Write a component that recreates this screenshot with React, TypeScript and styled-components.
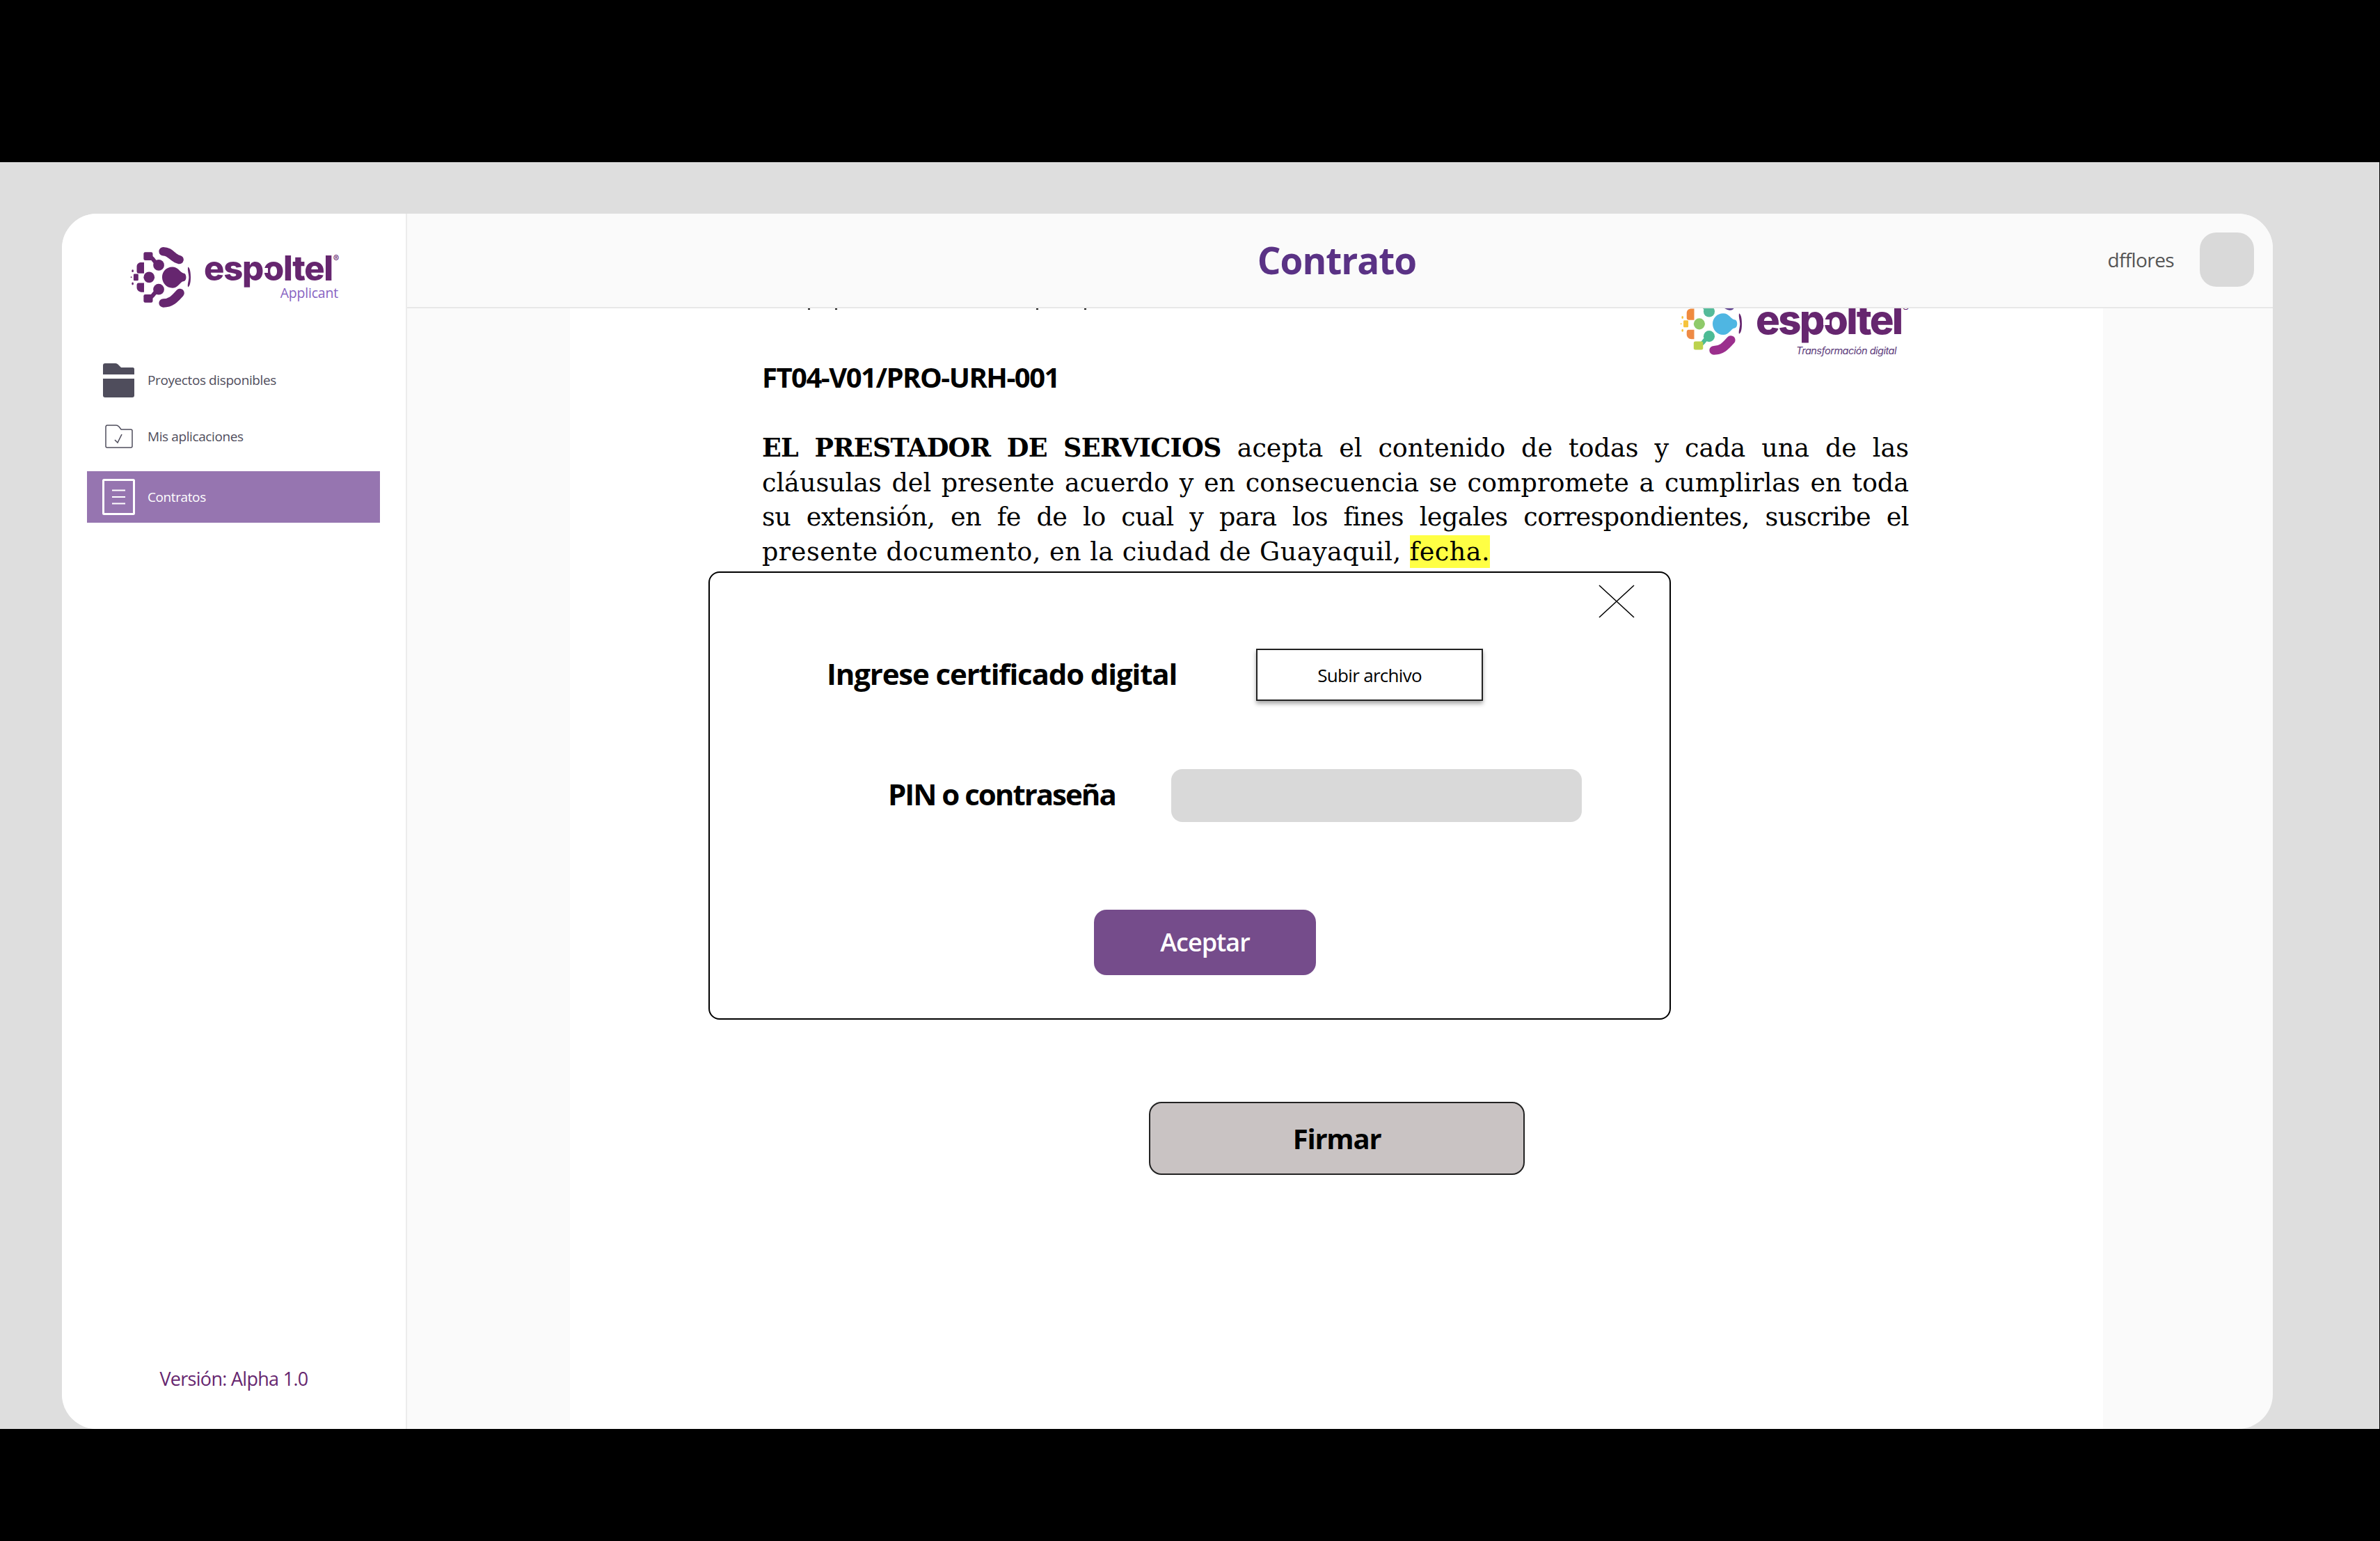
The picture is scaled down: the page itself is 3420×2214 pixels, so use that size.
import React from "react";
import styled, { createGlobalStyle } from "styled-components";

const GlobalStyle = createGlobalStyle`
  html, body { margin: 0; padding: 0; background: #000; }
  * { box-sizing: border-box; }
  #root { width: 3420px; height: 2214px; overflow: hidden; }
`;

const UI = `"Open Sans", "Noto Sans", sans-serif`;

const Frame = styled.div`
  width: 3420px;
  height: 2214px;
  background: #000;
  display: flex;
  flex-direction: column;
  padding-top: 233px;
  font-family: ${UI};
`;
const Stage = styled.div`
  width: 3419px;
  height: 1820px;
  background: #dedede;
  padding: 74px 0 0 89px;
`;
const Window = styled.div`
  width: 3177px;
  height: 1746px;
  border-radius: 50px;
  overflow: hidden;
  background: #fafafa;
  display: flex;
`;
const Sidebar = styled.aside`
  width: 496px;
  height: 100%;
  background: #fff;
  display: flex;
  flex-direction: column;
  flex: none;
  border-right: 2px solid #ececec;
`;
const Brand = styled.div`
  display: flex;
  align-items: flex-start;
  gap: 18px;
  padding: 47px 0 0 98px;
  height: 202px;
`;
const BrandText = styled.div`
  position: relative;
  width: 198px;
  padding-top: 7px;
`;
const Wordmark = styled.div<{ $size: number; $spacing: number }>`
  font-family: Inter, "Liberation Sans", sans-serif;
  font-weight: 800;
  font-size: ${(p) => p.$size}px;
  letter-spacing: ${(p) => p.$spacing}px;
  line-height: 1;
  color: #66266f;
  white-space: nowrap;
`;
const OpenO = styled.span`
  position: relative;
  display: inline-block;
  &::after {
    content: "";
    position: absolute;
    left: 0;
    top: 50%;
    width: 26%;
    height: 14%;
    margin-top: -1%;
    background: #fff;
  }
`;
const Reg = styled.sup`
  font-size: 0.26em;
  font-weight: 600;
  vertical-align: 2.1em;
  line-height: 0;
  margin-left: 1px;
`;
const Applicant = styled.div`
  position: absolute;
  right: 5px;
  top: 54px;
  font-size: 19.5px;
  line-height: 26px;
  letter-spacing: -0.2px;
  color: #8763c2;
`;
const Nav = styled.nav`
  display: flex;
  flex-direction: column;
  gap: 7px;
  width: 421px;
  margin-left: 36px;
`;
const NavItem = styled.div<{ $active?: boolean }>`
  height: 74px;
  display: flex;
  align-items: center;
  gap: 18px;
  padding-left: 22px;
  margin-top: ${(p) => (p.$active ? 6 : 0)}px;
  background: ${(p) => (p.$active ? "#9675b0" : "transparent")};
  color: ${(p) => (p.$active ? "#fff" : "#4f4d5c")};
  font-size: 19px;
  letter-spacing: -0.4px;
  white-space: nowrap;
`;
const NavIcon = styled.span`
  width: 47px;
  display: flex;
  justify-content: center;
  flex: none;
`;
const Version = styled.div`
  margin-top: auto;
  padding-bottom: 54px;
  text-align: center;
  font-size: 27px;
  line-height: 36px;
  letter-spacing: -0.7px;
  color: #66266f;
`;
const Main = styled.main`
  flex: 1;
  min-width: 0;
  display: flex;
  flex-direction: column;
`;
const Header = styled.header`
  height: 136px;
  flex: none;
  display: grid;
  grid-template-columns: 1fr auto 1fr;
  align-items: center;
  padding: 0 27px 2px 18px;
  background: #fafafa;
  border-bottom: 2px solid #e8e8e8;
`;
const Title = styled.h1`
  grid-column: 2;
  margin: 0;
  font-size: 53px;
  font-weight: 700;
  line-height: 1;
  letter-spacing: -1px;
  color: #5a3285;
`;
const UserBox = styled.div`
  grid-column: 3;
  justify-self: end;
  display: flex;
  align-items: center;
  gap: 37px;
`;
const UserName = styled.span`
  font-size: 28px;
  letter-spacing: -0.6px;
  color: #555;
`;
const Avatar = styled.div`
  width: 78px;
  height: 78px;
  border-radius: 24px;
  background: #d9d9d9;
`;
const Body = styled.div`
  flex: 1;
  min-height: 0;
  display: flex;
  padding: 0 244px 0 234px;
`;
const Doc = styled.div`
  position: relative;
  width: 2203px;
  height: 100%;
  overflow: hidden;
  background: #fff;
  padding: 0 279px 0 276px;
`;
const ClippedTail = styled.div`
  display: flex;
  height: 2px;
  padding-left: 66px;
  gap: 36px;
`;
const Tail = styled.i<{ $push?: number }>`
  width: 3px;
  height: 2px;
  background: #222;
  margin-left: ${(p) => p.$push ?? 0}px;
`;
const DocLogo = styled.div`
  display: flex;
  justify-content: flex-end;
  align-items: flex-start;
  gap: 19px;
  height: 63px;
  margin: -25px 6px 0 0;
`;
const DocLogoText = styled.div`
  position: relative;
  width: 214px;
  height: 88px;
  padding-top: 10px;
`;
const Tagline = styled.div`
  position: absolute;
  right: 12px;
  top: 76px;
  font-family: Inter, sans-serif;
  font-style: italic;
  font-size: 14.5px;
  line-height: 16px;
  letter-spacing: -0.5px;
  color: #5b3a7a;
  white-space: nowrap;
`;
const Code = styled.h2`
  margin: 34px 0 0;
  font-family: "Open Sans", sans-serif;
  font-size: 40px;
  line-height: 50px;
  font-weight: 700;
  letter-spacing: -1.5px;
  color: #000;
`;
const Paragraph = styled.div`
  margin-top: 52px;
  font-family: "DejaVu Serif", serif;
  font-size: 36.5px;
  line-height: 49.5px;
  color: #000;
`;
const Line = styled.div<{ $last?: boolean; $tight?: number }>`
  text-align: justify;
  text-align-last: ${(p) => (p.$last ? "left" : "justify")};
  letter-spacing: ${(p) => p.$tight ?? 0}px;
  white-space: ${(p) => (p.$last ? "nowrap" : "normal")};
`;
const Strong = styled.b`
  letter-spacing: -0.7px;
`;
const Mark2 = styled.span`
  background: #ffff44;
  padding: 2px 0;
`;
const Firmar = styled.button`
  display: block;
  width: 540px;
  height: 105px;
  margin: 766px 0 0 556px;
  background: #c9c3c3;
  border: 2px solid #222;
  border-radius: 18px;
  font-family: ${UI};
  font-size: 40px;
  font-weight: 700;
  letter-spacing: -1.2px;
  color: #000;
`;
const Modal = styled.section`
  position: absolute;
  left: 199px;
  top: 378px;
  width: 1383px;
  height: 644px;
  background: #fff;
  border: 2px solid #000;
  border-radius: 16px;
  padding-top: 109px;
`;
const Close = styled.button`
  position: absolute;
  top: 17px;
  right: 50px;
  width: 52px;
  height: 48px;
  padding: 0;
  border: 0;
  background: none;
  display: flex;
`;
const Field = styled.div<{ $indent: number; $gap: number; $after: number }>`
  display: flex;
  align-items: center;
  gap: ${(p) => p.$gap}px;
  padding-left: ${(p) => p.$indent}px;
  margin-bottom: ${(p) => p.$after}px;
`;
const Label = styled.label<{ $spacing: number }>`
  font-size: 42px;
  font-weight: 700;
  line-height: 1;
  letter-spacing: ${(p) => p.$spacing}px;
  padding-bottom: 4px;
  color: #000;
  white-space: nowrap;
`;
const Upload = styled.button`
  width: 326px;
  height: 75px;
  background: #fff;
  border: 2px solid #222;
  box-shadow: 0 4px 6px rgba(0, 0, 0, 0.35);
  font-family: ${UI};
  font-size: 26px;
  letter-spacing: -0.7px;
  color: #000;
`;
const Pin = styled.div`
  width: 590px;
  height: 76px;
  border-radius: 16px;
  background: #d9d9d9;
`;
const Accept = styled.button`
  display: block;
  width: 319px;
  height: 94px;
  margin-left: 552px;
  padding-bottom: 3px;
  border: 0;
  border-radius: 18px;
  background: #754c8b;
  color: #fff;
  font-family: ${UI};
  font-size: 36px;
  font-weight: 600;
  letter-spacing: -1px;
`;

type Palette = {
  blob: string; dot: string; topArc: string; upper: string; upperLeft: string;
  side: string; small: string; sideLow: string; lower: string; lowerLeft: string; lowArc: string; rim: string;
};
const solid = "#66266f";
const purple: Palette = {
  blob: solid, dot: solid, topArc: solid, upper: solid, upperLeft: solid, side: solid,
  small: solid, sideLow: solid, lower: solid, lowerLeft: solid, lowArc: solid, rim: solid,
};
const colour: Palette = {
  blob: "#4fb6e2", dot: "#8fca6a", topArc: "#5d3f8e", upper: "#55bb9a", upperLeft: "#8cc65e",
  side: "#ef8a3e", small: "#f5c33b", sideLow: "#ee8a45", lower: "#4cbb95", lowerLeft: "#bcd24e",
  lowArc: "#9b2f8d", rim: "#66266f",
};

const LogoMark = ({ size, c }: { size: number; c: Palette }) => (
  <svg width={size} height={size} viewBox="48 40 266 268" style={{ flex: "none" }}>
    <path fill={c.blob} d="M232 130C258 130 265 155 280 157C296 157 296 193 280 193C265 195 258 222 232 222C206 222 187 200 187 175C187 150 206 130 232 130Z" />
    <circle cx="130" cy="175" r="24" fill={c.dot} />
    <path fill="none" stroke={c.topArc} strokeWidth="38" strokeLinecap="round" d="M192 62C225 62 232 92 262 98" />
    <circle cx="172" cy="122" r="24" fill={c.upper} />
    <path fill="none" stroke={c.upper} strokeWidth="18" d="M128 84C150 88 150 110 172 122" />
    <rect x="106" y="65" width="40" height="36" rx="7" fill={c.upperLeft} />
    <path fill={c.side} d="M108 110V158H84C78 158 76 154 76 148V128C76 116 86 110 96 110Z" />
    <rect x="62" y="160" width="21" height="30" rx="4" fill={c.small} />
    <ellipse cx="58" cy="147" rx="4" ry="6" fill={c.small} />
    <circle cx="52" cy="175" r="3" fill={c.small} />
    <ellipse cx="58" cy="203" rx="4" ry="6" fill={c.small} />
    <path fill={c.sideLow} d="M108 240V200H84C78 200 76 204 76 210V220C76 232 86 240 96 240Z" />
    <circle cx="172" cy="228" r="24" fill={c.lower} />
    <path fill="none" stroke={c.lower} strokeWidth="18" d="M172 228C150 240 150 262 128 266" />
    <rect x="106" y="250" width="40" height="36" rx="7" fill={c.lowerLeft} />
    <path fill="none" stroke={c.lowArc} strokeWidth="38" strokeLinecap="round" d="M192 288C225 288 240 272 265 244" />
    <path fill={c.rim} d="M300 130C306 132 312 145 312 175C312 205 306 216 300 218C297 205 304 190 304 175C304 160 297 145 300 130Z" />
  </svg>
);

const Word = () => (
  <>
    esp<OpenO>o</OpenO>ltel<Reg>®</Reg>
  </>
);

const FolderSolid = () => (
  <svg width="45" height="49" viewBox="0 0 45 49">
    <path fill="#4f4d5c" d="M0 16V3C0 1 1 0 3 0H18C20 0 21 1 22 2L26 6H43C44 6 45 7 45 8V16Z" />
    <path fill="#4f4d5c" d="M0 22H45V46C45 48 44 49 42 49H3C1 49 0 48 0 46Z" />
  </svg>
);
const FolderCheck = () => (
  <svg width="40" height="34" viewBox="0 0 40 34" fill="none" stroke="#4f4d5c">
    <path strokeWidth="1.5" d="M1 4C1 2 2 1 3 1H16C18 1 19 2 20 3L23 7H37C38 7 39 8 39 9V31C39 32 38 33 37 33H3C2 33 1 32 1 31Z" />
    <path strokeWidth="1.6" d="M14 22L18 26L24 14" />
  </svg>
);
const FolderLines = () => (
  <svg width="47" height="52" viewBox="0 0 47 52" fill="none" stroke="#fff">
    <rect x="1.5" y="1.5" width="44" height="49" rx="1" strokeWidth="3" />
    <path strokeWidth="2" d="M14 16.5H33M14 26H33M14 35.5H33" />
  </svg>
);

export default function App() {
  return (
    <Frame>
      <GlobalStyle />
      <Stage>
        <Window>
          <Sidebar>
            <Brand>
              <LogoMark size={88} c={purple} />
              <BrandText>
                <Wordmark $size={49} $spacing={-1.3}><Word /></Wordmark>
                <Applicant>Applicant</Applicant>
              </BrandText>
            </Brand>
            <Nav>
              <NavItem><NavIcon><FolderSolid /></NavIcon>Proyectos disponibles</NavItem>
              <NavItem><NavIcon><FolderCheck /></NavIcon>Mis aplicaciones</NavItem>
              <NavItem $active><NavIcon><FolderLines /></NavIcon>Contratos</NavItem>
            </Nav>
            <Version>Versión: Alpha 1.0</Version>
          </Sidebar>
          <Main>
            <Header>
              <Title>Contrato</Title>
              <UserBox>
                <UserName>dfflores</UserName>
                <Avatar />
              </UserBox>
            </Header>
            <Body>
              <Doc>
                <ClippedTail>
                  <Tail /><Tail /><Tail $push={250} /><Tail $push={30} />
                </ClippedTail>
                <DocLogo>
                  <LogoMark size={90} c={colour} />
                  <DocLogoText>
                    <Wordmark $size={58} $spacing={-2.7}><Word /></Wordmark>
                    <Tagline>Transformación digital</Tagline>
                  </DocLogoText>
                </DocLogo>
                <Code>FT04-V01/PRO-URH-001</Code>
                <Paragraph>
                  <Line><Strong>EL PRESTADOR DE SERVICIOS</Strong> acepta el contenido de todas y cada una de las</Line>
                  <Line>cláusulas del presente acuerdo y en consecuencia se compromete a cumplirlas en toda</Line>
                  <Line $tight={-0.5}>su extensión, en fe de lo cual y para los fines legales correspondientes, suscribe el</Line>
                  <Line $last $tight={0.5}>presente documento, en la ciudad de Guayaquil, <Mark2>fecha.</Mark2></Line>
                </Paragraph>
                <Firmar>Firmar</Firmar>
                <Modal>
                  <Close aria-label="Cerrar">
                    <svg width="52" height="48" viewBox="0 0 52 48" fill="none" stroke="#000" strokeWidth="1.6">
                      <path d="M1 1L51 47M51 1L1 47" />
                    </svg>
                  </Close>
                  <Field $indent={168} $gap={114} $after={98}>
                    <Label $spacing={-1.15}>Ingrese certificado digital</Label>
                    <Upload>Subir archivo</Upload>
                  </Field>
                  <Field $indent={256} $gap={80} $after={126}>
                    <Label $spacing={-2}>PIN o contraseña</Label>
                    <Pin />
                  </Field>
                  <Accept>Aceptar</Accept>
                </Modal>
              </Doc>
            </Body>
          </Main>
        </Window>
      </Stage>
    </Frame>
  );
}
